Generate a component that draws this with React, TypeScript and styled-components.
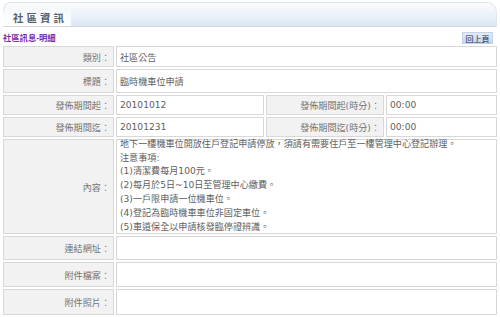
import { Fragment } from 'react';
import styled, { createGlobalStyle } from 'styled-components';

const GlobalStyle = createGlobalStyle`
  html, body {
    margin: 0;
    padding: 0;
    background: #ffffff;
  }
  body {
    font-family: "Liberation Sans", "Noto Sans CJK TC", sans-serif;
  }
`;

const Page = styled.div`
  width: 500px;
  height: 317px;
  overflow: hidden;
  padding: 2px 3px 0 3px;
  box-sizing: border-box;
`;

const HeaderBar = styled.div`
  height: 25px;
  border: 1px solid #dfe6ee;
  border-bottom: 1px solid #cfd6de;
  border-radius: 8px 10px 0 0;
  background: linear-gradient(#fbfcfe, #e6eef7 70%, #dde7f2);
  display: flex;
  align-items: flex-end;
  box-sizing: border-box;
`;

const Tab = styled.div`
  width: 68px;
  height: 18px;
  margin-left: -1px;
  background: linear-gradient(#f5f8fb, #ffffff);
  border-radius: 6px 0 0 0;
  display: flex;
  align-items: center;
  padding-left: 10px;
  box-sizing: border-box;
  font-size: 10.5px;
  font-weight: bold;
  letter-spacing: 3px;
  color: #56626f;
`;

const SubBar = styled.div`
  display: flex;
  justify-content: space-between;
  align-items: flex-end;
  height: 19px;
  padding-bottom: 2px;
  box-sizing: border-box;
`;

const Crumb = styled.span`
  font-size: 8.3px;
  font-weight: bold;
  color: #7a2ea8;
  padding-bottom: 1px;
`;

const BackButton = styled.button`
  font-family: inherit;
  font-size: 8px;
  color: #1c2f5a;
  height: 12px;
  width: 31px;
  padding: 0;
  margin-right: 4px;
  margin-bottom: 0;
  border: 1px solid #c3d2e6;
  background: linear-gradient(#e3ecf8, #c4d5ec);
  display: flex;
  align-items: center;
  justify-content: center;
`;

const Grid = styled.div`
  display: grid;
  grid-template-columns: 111px 148px 118px 111px;
  column-gap: 2px;
  row-gap: 2px;
`;

const Cell = styled.div<{ $h: number; $span?: number; $label?: boolean }>`
  height: ${(p) => p.$h}px;
  grid-column: span ${(p) => p.$span ?? 1};
  border: 1px solid #d8d8d8;
  box-sizing: border-box;
  background: ${(p) => (p.$label ? '#f2f2f2' : '#ffffff')};
  color: ${(p) => (p.$label ? '#737373' : '#5e5e5e')};
  font-family: "DejaVu Sans", "Noto Sans CJK TC", sans-serif;
  font-size: 9.1px;
  display: flex;
  align-items: center;
  justify-content: ${(p) => (p.$label ? 'flex-end' : 'flex-start')};
  padding: ${(p) => (p.$label ? '0 3px 0 0' : '0 0 0 3px')};
  white-space: nowrap;
`;

const Lines = styled.div`
  line-height: 13.8px;
  margin-top: -1px;
`;

const rows = [
  { label: '類別：', value: '社區公告', h: 21 },
  { label: '標題：', value: '臨時機車位申請', h: 24 },
];

const dateRows = [
  { l1: '發佈期間起：', v1: '20101012', l2: '發佈期間起(時分)：', v2: '00:00', h: 20 },
  { l1: '發佈期間迄：', v1: '20101231', l2: '發佈期間迄(時分)：', v2: '00:00', h: 20 },
];

const contentLines = [
  '地下一樓機車位開放住戶登記申請停放，須請有需要住戶至一樓管理中心登記辦理。',
  '注意事項:',
  '(1)清潔費每月100元。',
  '(2)每月於5日~10日至管理中心繳費。',
  '(3)一戶限申請一位機車位。',
  '(4)登記為臨時機車車位非固定車位。',
  '(5)車道保全以申請核發臨停證辨識。',
];

const tailRows = [
  { label: '連結網址：', h: 24 },
  { label: '附件檔案：', h: 25 },
  { label: '附件照片：', h: 26 },
];

export default function App() {
  return (
    <Page>
      <GlobalStyle />
      <HeaderBar>
        <Tab>社區資訊</Tab>
      </HeaderBar>
      <SubBar>
        <Crumb>社區訊息-明細</Crumb>
        <BackButton>回上頁</BackButton>
      </SubBar>
      <Grid>
        {rows.map((r) => (
          <Fragment key={r.label}>
            <Cell $h={r.h} $label>{r.label}</Cell>
            <Cell $h={r.h} $span={3}>{r.value}</Cell>
          </Fragment>
        ))}
        {dateRows.map((r) => (
          <Fragment key={r.l1}>
            <Cell $h={r.h} $label>{r.l1}</Cell>
            <Cell $h={r.h}>{r.v1}</Cell>
            <Cell $h={r.h} $label>{r.l2}</Cell>
            <Cell $h={r.h}>{r.v2}</Cell>
          </Fragment>
        ))}
        <Cell $h={95} $label>內容：</Cell>
        <Cell $h={95} $span={3}>
          <Lines>
            {contentLines.map((t) => (
              <div key={t}>{t}</div>
            ))}
          </Lines>
        </Cell>
        {tailRows.map((r) => (
          <Fragment key={r.label}>
            <Cell $h={r.h} $label>{r.label}</Cell>
            <Cell $h={r.h} $span={3} />
          </Fragment>
        ))}
      </Grid>
    </Page>
  );
}
